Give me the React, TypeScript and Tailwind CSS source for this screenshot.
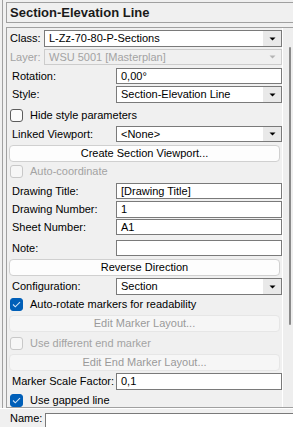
import React from "react";

type Kind = "select" | "input";

function Arrow({ disabled }: { disabled?: boolean }) {
  return (
    <svg width="7" height="4" viewBox="0 0 7 4">
      <path d="M0.5 0.5h6L3.5 3.5z" fill={disabled ? "#b4b4b4" : "#000"} />
    </svg>
  );
}

function Box({
  value,
  kind,
  disabled,
  h,
}: {
  value: string;
  kind: Kind;
  disabled?: boolean;
  h: number;
}) {
  return (
    <div
      className={`flex flex-1 border ${
        disabled
          ? "border-[#cccccc] bg-[#f0f0f0] text-[#a3a3a3]"
          : "border-[#7a7a7a] bg-white text-black"
      }`}
      style={{ height: h }}
    >
      <div className="flex flex-1 items-center overflow-hidden whitespace-nowrap pl-[4px]">{value}</div>
      {kind === "select" && (
        <div
          className={`flex w-[18px] items-center justify-center ${
            disabled ? "bg-[#f0f0f0]" : "bg-[#e9e9e9]"
          }`}
        >
          <Arrow disabled={disabled} />
        </div>
      )}
    </div>
  );
}

function Field({
  label,
  value,
  kind = "input",
  wide,
  disabled,
  h = 17,
  mt,
}: {
  label: string;
  value: string;
  kind?: Kind;
  wide?: boolean;
  disabled?: boolean;
  h?: number;
  mt: number;
}) {
  return (
    <div className="flex items-center" style={{ marginTop: mt, height: h }}>
      <div
        className={`${wide ? "w-[37px] pl-[3px]" : "w-[109px] pl-[5px]"} whitespace-nowrap ${
          disabled ? "text-[#a3a3a3]" : "text-black"
        }`}
      >
        {label}
      </div>
      <Box value={value} kind={kind} disabled={disabled} h={h} />
    </div>
  );
}

function Button({ label, disabled, mt }: { label: string; disabled?: boolean; mt: number }) {
  return (
    <div
      className={`ml-[2px] mr-[2px] flex h-[17px] items-center justify-center rounded-[4px] border ${
        disabled
          ? "border-[#e6e6e6] bg-[#f6f6f6] text-[#9a9a9a]"
          : "border-[#d0d0d0] bg-[#fdfdfd] text-black"
      }`}
      style={{ marginTop: mt }}
    >
      {label}
    </div>
  );
}

function Check({
  label,
  checked,
  disabled,
  mt,
}: {
  label: string;
  checked?: boolean;
  disabled?: boolean;
  mt: number;
}) {
  return (
    <div className="flex h-[13px] items-center pl-[3px]" style={{ marginTop: mt }}>
      <div
        className={`flex h-[13px] w-[13px] items-center justify-center rounded-[3px] border ${
          checked
            ? "border-[#005fb8] bg-[#005fb8]"
            : disabled
            ? "border-[#c8c8c8] bg-[#f6f6f6]"
            : "border-[#5c5c5c] bg-[#fbfbfb]"
        }`}
      >
        {checked && (
          <svg width="9" height="7" viewBox="0 0 9 7">
            <path d="M1 3.5l2.3 2.3L8 1.2" fill="none" stroke="#cfe3f7" strokeWidth="1.1" />
          </svg>
        )}
      </div>
      <span className={`ml-[7px] whitespace-nowrap ${disabled ? "text-[#a3a3a3]" : "text-black"}`}>
        {label}
      </span>
    </div>
  );
}

export default function App() {
  return (
    <div className="flex h-[427px] w-[293px] flex-col overflow-hidden bg-[#f0f0f0] font-['Liberation_Sans',Arial,sans-serif] text-[11px] leading-none">
      {/* Upper area with title and property list */}
      <div className="flex h-[408px]">
        <div className="ml-[2px] w-[1px] bg-[#a0a0a0]" />
        <div className="ml-[3px] flex flex-1 flex-col">
          {/* Title */}
          <div className="mt-[2px] flex h-[23px] items-center border-y border-l border-[#a0a0a0] pl-[3px] text-[13px] font-bold text-[#1a1a1a]">
            Section-Elevation Line
          </div>

          {/* Panel */}
          <div className="mt-[4px] flex flex-1 border-t border-b border-l border-[#a0a0a0]">
            <div className="flex flex-1 flex-col overflow-hidden">
              <Field label="Class:" value="L-Zz-70-80-P-Sections" kind="select" wide mt={2} />
              <Field label="Layer:" value="WSU 5001 [Masterplan]" kind="select" wide disabled h={16} mt={2} />
              <Field label="Rotation:" value="0,00°" h={16} mt={3} />
              <Field label="Style:" value="Section-Elevation Line" kind="select" mt={2} />
              <Check label="Hide style parameters" mt={6} />
              <Field label="Linked Viewport:" value="<None>" kind="select" h={16} mt={4} />
              <Button label="Create Section Viewport..." mt={3} />
              <Check label="Auto-coordinate" disabled mt={3} />
              <Field label="Drawing Title:" value="[Drawing Title]" h={16} mt={5} />
              <Field label="Drawing Number:" value="1" mt={2} />
              <Field label="Sheet Number:" value="A1" h={16} mt={1} />
              <Field label="Note:" value="" h={16} mt={5} />
              <Button label="Reverse Direction" mt={3} />
              <Field label="Configuration:" value="Section" kind="select" mt={2} />
              <Check label="Auto-rotate markers for readability" checked mt={3} />
              <Button label="Edit Marker Layout..." disabled mt={4} />
              <Check label="Use different end marker" disabled mt={5} />
              <Button label="Edit End Marker Layout..." disabled mt={4} />
              <Field label="Marker Scale Factor:" value="0,1" mt={2} />
              <Check label="Use gapped line" checked mt={4} />
            </div>

            {/* Scrollbar */}
            <div className="flex w-[11px] justify-end border-l border-white bg-[#eeeeee] pr-[2px]">
              <div className="mt-[19px] h-[278px] w-[2px] rounded-full bg-[#8a8a8a]" />
            </div>
          </div>
        </div>
      </div>
      <div className="h-[1px] bg-white" />

      {/* Name row */}
      <div className="flex flex-1 items-end">
        <div className="w-[45px] pb-[3px] pl-[10px] text-black">Name:</div>
        <div className="h-[14px] flex-1 border-l border-t border-[#7a7a7a] bg-white" />
      </div>
    </div>
  );
}
